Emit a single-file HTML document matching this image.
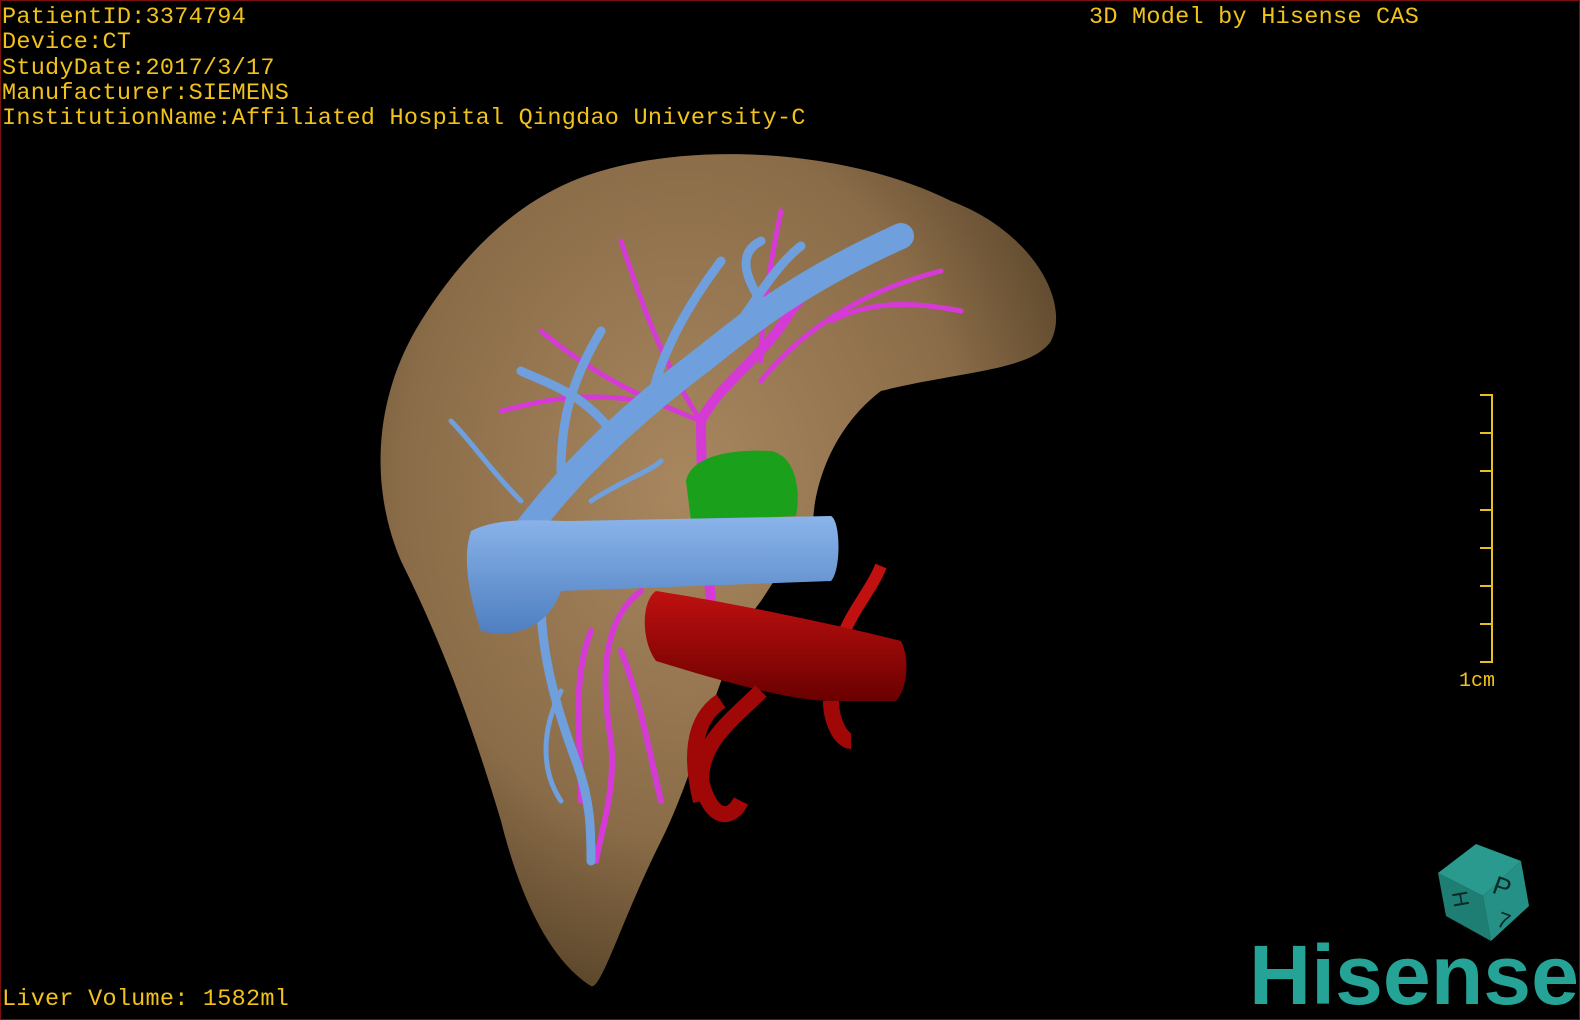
<!DOCTYPE html>
<html><head><style>
html,body{margin:0;padding:0;background:#000;}
#c{position:relative;width:1580px;height:1020px;background:#000;overflow:hidden;box-sizing:border-box;border:1px solid #7a1010;}
.t{position:absolute;left:1px;font-family:"Liberation Mono",monospace;font-size:23.5px;color:#f2c21c;line-height:25.3px;white-space:pre;letter-spacing:0.25px}
</style></head><body><div id="c">
<svg width="1580" height="1020" style="position:absolute;left:0;top:0">
<defs>
<radialGradient id="lv" cx="0.45" cy="0.4" r="0.7"><stop offset="0" stop-color="#a8875f"/><stop offset="0.6" stop-color="#8a6c48"/><stop offset="1" stop-color="#4a3820"/></radialGradient>
<linearGradient id="bl" x1="0" y1="0" x2="0" y2="1"><stop offset="0" stop-color="#8ab4ea"/><stop offset="1" stop-color="#4f7fc0"/></linearGradient>
<linearGradient id="rd" x1="0" y1="0" x2="0" y2="1"><stop offset="0" stop-color="#c01010"/><stop offset="1" stop-color="#6a0000"/></linearGradient>
</defs>
<path d="M600,170 C700,140 850,150 950,200 C1030,230 1070,300 1050,340 C1030,370 960,370 880,390 C840,420 815,470 812,520 L760,600 C720,650 700,760 660,840 C620,920 600,990 590,985 C550,960 520,900 500,820 C470,720 440,640 400,560 C370,490 370,400 420,320 C470,240 530,190 600,170 Z" fill="url(#lv)"/>
<g stroke="#d63ad6" fill="none" stroke-linecap="round">
<path d="M710,600 C700,500 700,440 700,420 C720,380 760,360 790,310 C820,270 860,250 900,230" stroke-width="10"/>
<path d="M700,420 C650,400 600,380 540,330 M760,380 C800,330 860,290 940,270 M700,420 C660,360 640,300 620,240 M640,400 C580,390 540,400 500,410 M760,360 C760,310 770,260 780,210 M830,320 C870,300 910,300 960,310" stroke-width="5"/>
<path d="M640,590 C600,620 600,680 610,740 C615,790 600,830 595,860 M620,650 C640,700 650,760 660,800 M590,630 C570,680 580,740 580,800" stroke-width="6"/>
</g>
<g stroke="#6f9fdc" fill="none" stroke-linecap="round">
<path d="M510,550 C560,480 620,420 700,360 C750,320 800,280 900,235" stroke-width="26"/>
<path d="M560,470 C560,420 570,380 600,330 M650,400 C660,350 690,300 720,260 M740,320 C760,290 780,260 800,245 M610,430 C580,390 540,380 520,370 M760,300 C740,270 740,250 760,240 M540,600 C540,660 560,720 575,760 C590,800 590,830 590,860" stroke-width="9"/>
<path d="M520,500 C490,470 470,440 450,420 M590,500 C620,480 650,470 660,460 M560,690 C540,730 540,770 560,800" stroke-width="5"/>
</g>
<path d="M685,480 C690,455 730,448 770,450 C795,455 800,490 795,515 L690,520 Z" fill="#1aa01a"/>
<path d="M470,530 C500,515 540,520 570,520 L830,515 C840,520 840,570 830,580 L560,590 C550,620 520,640 480,630 C470,600 460,560 470,530 Z" fill="url(#bl)"/>
<path d="M880,565 C870,590 850,610 840,640" stroke="#c01010" stroke-width="12" fill="none"/>
<path d="M655,590 C720,600 820,620 900,640 C910,660 905,690 895,700 L830,700 C790,700 720,680 655,660 C640,640 640,600 655,590 Z" fill="url(#rd)"/>
<path d="M760,690 C730,720 700,740 700,780 C710,820 730,820 740,800 M720,700 C690,720 690,760 700,800 M830,700 C830,720 840,740 850,740" stroke="#a00808" stroke-width="16" fill="none"/>
<g stroke="#e6c020" stroke-width="2" fill="none">
<path d="M1479,394 H1491 V661 H1479 M1479,432 H1491 M1479,470 H1491 M1479,509 H1491 M1479,547 H1491 M1479,585 H1491 M1479,623 H1491"/>
</g>
<text x="1458" y="685" font-family="Liberation Mono,monospace" font-size="20" fill="#f2c21c">1cm</text>
<polygon points="1437,872 1475,843 1520,860 1482,895" fill="#2a9a8e"/>
<polygon points="1437,872 1482,895 1490,940 1445,915" fill="#1e7e74"/>
<polygon points="1482,895 1520,860 1528,905 1490,940" fill="#259085"/>
<text x="1494" y="892" font-family="Liberation Sans,sans-serif" font-size="26" fill="#0a2a28" transform="rotate(20 1494 880)">P</text>
<text x="1452" y="906" font-family="Liberation Sans,sans-serif" font-size="22" fill="#0a2a28" transform="rotate(80 1460 898)">H</text>
<text x="1497" y="926" font-family="Liberation Sans,sans-serif" font-size="22" fill="#0a2a28" transform="rotate(20 1500 918)">7</text>
<text x="1248" y="1003" font-family="Liberation Sans,sans-serif" font-weight="bold" font-size="84" fill="#25a396" textLength="330" lengthAdjust="spacingAndGlyphs">Hisense</text>
</svg>
<div class="t" style="top:4px">PatientID:3374794
Device:CT
StudyDate:2017/3/17
Manufacturer:SIEMENS
InstitutionName:Affiliated Hospital Qingdao University-C</div>
<div class="t" style="top:4px;left:1088px">3D Model by Hisense CAS</div>
<div class="t" style="top:986px">Liver Volume: 1582ml</div>
</div></body></html>
